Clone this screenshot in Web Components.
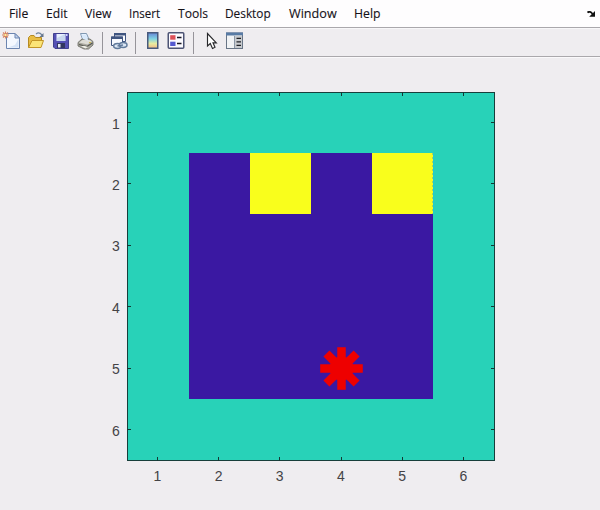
<!DOCTYPE html>
<html lang="en">
<head>
<meta charset="utf-8">
<title>Figure</title>
<style>
html,body{margin:0;width:600px;height:510px;overflow:hidden;background:#efedf0}
</style>
</head>
<body>
<figure-window></figure-window>
<script>
class MenuItem extends HTMLElement{
  connectedCallback(){
    const w=this.getAttribute('width'),t=this.getAttribute('label');
    this.attachShadow({mode:'open'}).innerHTML=`<style>:host{display:block;height:20px}svg{display:block;overflow:visible}
    text{font:12.4px "Open Sans","Noto Sans",sans-serif;fill:#151118;stroke:#151118;stroke-width:.12px}</style>
    <svg width="${w}" height="20"><text x="0" y="14" textLength="${w}" lengthAdjust="spacingAndGlyphs">${t}</text></svg>`;
  }
}
customElements.define('menu-item',MenuItem);

class MenuBar extends HTMLElement{
  connectedCallback(){
    this.attachShadow({mode:'open'}).innerHTML=`<style>:host{display:flex;box-sizing:border-box;height:27px;padding:4px 4px 0 8.6px;gap:17.7px;background:#fefdfe}
    .dock{margin:7px 0 0 auto}</style>
    <menu-item label="File" width="19.3"></menu-item><menu-item label="Edit" width="21.5"></menu-item>
    <menu-item label="View" width="26.5"></menu-item><menu-item label="Insert" width="31"></menu-item>
    <menu-item label="Tools" width="30"></menu-item><menu-item label="Desktop" width="45.7"></menu-item>
    <menu-item label="Window" width="47.7"></menu-item><menu-item label="Help" width="26.5"></menu-item>
    <svg class="dock" width="9" height="7" viewBox="0 0 9 7"><path d="M.5 1.5Q3-.5 5.6 3" fill="none" stroke="#111" stroke-width="1.7"/><path d="M8 0V5.8H2.2Z" fill="#111"/></svg>`;
  }
}
customElements.define('menu-bar',MenuBar);

const icons={
new:`<path d="M4.5 2.5H13L17.5 7V17.5H4.5Z" fill="#f4f8ff" stroke="#6c85b0"/><path d="M6 16.5H16.5V8L13 14Z" fill="#d5e3f7"/><path d="M13 2.5V7H17.5Z" fill="#c3d5ef" stroke="#6c85b0"/><path d="M3.5.5V7.5M0 4H7M1 1.5L6 6.5M6 1.5L1 6.5" stroke="#d78561" stroke-width="1.1"/><rect x="2.5" y="3" width="2" height="2" fill="#fff09a"/>`,
open:`<path d="M1.5 16.5V6.5L3.5 4.5H7L8.5 6.5H14.5V9" fill="#e9bd43" stroke="#b58a22"/><path d="M1.5 16.5L5 9.5H16.5L14 16.5Z" fill="#fbe477" stroke="#c29527"/><path d="M9 3Q12 .5 15 4" fill="none" stroke="#70849d" stroke-width="1.2"/><path d="M16.5 2V6H12.5Z" fill="#64758c"/>`,
save:`<path d="M1.5 1.5H16.5V16.5H3L1.5 15Z" fill="#5551b5" stroke="#41418e"/><rect x="4.5" y="2" width="9" height="7" fill="#e9f1ff"/><path d="M5 6L13 2V9H5Z" fill="#c8d8ef"/><rect x="5" y="11" width="8" height="5" fill="#333760"/><rect x="6" y="12" width="2.5" height="3.5" fill="#e5eaf5"/><rect x="14" y="2" width="1.5" height="2" fill="#cbd0ff"/>`,
print:`<path d="M3.5 1.5H9.5L12.5 8.5H6Z" fill="#e3f0ff" stroke="#8198b1"/><path d="M1 10.5L5 7H13L16 9.5V13L11.5 17H7L1 14Z" fill="#aaa99f" stroke="#65665e" stroke-width=".8"/><path d="M2 10.5L5.5 8H12.5L15 9.7L10.5 12.5Z" fill="#dddcd5"/><path d="M6 7L4.5 3H9L11.5 9Z" fill="#d9e9fa"/><path d="M2 12.5L10 14.5L15.5 11" fill="none" stroke="#55564f" stroke-width="1.1"/><path d="M4 14.3L7 13.8L11 15L8.5 16.6Z" fill="#eeeeE6"/><rect x="12" y="10" width="2" height="1" fill="#cbb84e"/>`,
link:`<path d="M4.5 1.5H15.5V9.5H4.5Z" fill="#f9fbff" stroke="#405580"/><path d="M4 1H16V3.5H4Z" fill="#405580"/><path d="M1.5 5H12.5V13.5H1.5Z" fill="#f8faff" stroke="#405580"/><path d="M1 4.5H13V7H1Z" fill="#405580"/><g fill="#dce7f5" stroke="#627b9c" stroke-width="1.5"><ellipse cx="7.5" cy="14" rx="3.8" ry="2.4"/><ellipse cx="13.2" cy="13" rx="3.8" ry="2.4"/></g><path d="M7.5 14L13 13" stroke="#627b9c" stroke-width="1.4"/>`,
bar:`<defs><linearGradient id="g" x2="0" y2="1"><stop stop-color="#6685d6"/><stop offset=".4" stop-color="#80d5e3"/><stop offset=".7" stop-color="#e9eca0"/><stop offset="1" stop-color="#f2b985"/></linearGradient></defs><rect x="3.75" y=".75" width="10" height="15.5" fill="url(#g)" stroke="#485a7c" stroke-width="1.5"/>`,
legend:`<rect x="1.25" y=".75" width="15.5" height="15.5" rx="1" fill="#fbfaff" stroke="#4d5474" stroke-width="1.5"/><rect x="3.2" y="3.2" width="5.3" height="4.5" fill="#dc5058"/><rect x="3.2" y="9.7" width="5.3" height="4.3" fill="#5459d0"/><path d="M10 5.5H14.5M10 11.5H14.5" stroke="#171722" stroke-width="1.3"/>`,
arrow:`<path d="M4.5 1.5V14L7.3 11.5L9.5 16.5L12 15.3L10 10.8H13.3Z" fill="#fff" stroke="#28282b" stroke-width="1.15"/>`,
panel:`<rect x=".5" y="1" width="16" height="15.5" fill="#f1f3f5" stroke="#687586"/><path d="M0 .5H17V3.5H0Z" fill="#587ba5"/><path d="M9 3.5H16V16H9Z" fill="#c7cace"/><path d="M8.5 4V16" stroke="#8c97a6"/><path d="M10.5 6.3H15M10.5 9.8H15M10.5 13.3H15" stroke="#202126" stroke-width="1.3"/>`
};
class ToolIcon extends HTMLElement{
  connectedCallback(){
    this.attachShadow({mode:'open'}).innerHTML=`<style>:host{display:block;width:18px;height:19px}svg{display:block;overflow:visible}</style><svg width="18" height="19" viewBox="0 0 18 19">${icons[this.getAttribute('name')]}</svg>`;
  }
}
customElements.define('tool-icon',ToolIcon);

class ToolBar extends HTMLElement{
  connectedCallback(){
    this.attachShadow({mode:'open'}).innerHTML=`<style>:host{display:flex;box-sizing:border-box;height:30px;padding:4px 0 0 2px;border-top:1px solid #aaa8ac;border-bottom:1px solid #aaa8ac;background:#efedf0;box-shadow:inset 0 1px #f8f7f9,0 1px #faf9fb}
    tool-icon{flex:none}tool-icon[name=new],tool-icon[name=open]{margin-top:-1px}hr{flex:none;width:1px;height:22px;border:0;margin:0;background:#96949a}</style>
    <tool-icon name="new"></tool-icon><tool-icon name="open" style="margin-left:7px"></tool-icon><tool-icon name="save" style="margin-left:7px"></tool-icon><tool-icon name="print" style="margin:0 7px"></tool-icon><hr>
    <tool-icon name="link" style="margin:0 7px"></tool-icon><hr>
    <tool-icon name="bar" style="margin:0 5px 0 8px"></tool-icon><tool-icon name="legend" style="margin-right:8px"></tool-icon><hr>
    <tool-icon name="arrow" style="margin:0 5px 0 9px"></tool-icon><tool-icon name="panel"></tool-icon>`;
  }
}
customElements.define('tool-bar',ToolBar);

class GridPlot extends HTMLElement{
  connectedCallback(){
    let ticks='';
    for(let i=0;i<6;i++){
      const x=30+Math.round(i*61.2)+.5,y=31+Math.round(i*61.4)-.5;
      ticks+=`M${x} 0V4M${x} 369V365M0 ${y}H4M368 ${y}H364`;
    }
    const arms=[0,45,90,135].map(a=>`<path d="M0-21.3V21.3" transform="rotate(${a})"/>`).join('');
    const nums=[1,2,3,4,5,6].map(n=>`<span>${n}</span>`).join('');
    this.attachShadow({mode:'open'}).innerHTML=`<style>:host{display:grid;grid-template:369px 32px/22px 368px;padding:34.6px 0 0 104.8px;font:14px "Liberation Sans",Arial,sans-serif;color:#444346}
    svg{display:block}.y,.x{display:flex}.y{flex-direction:column;padding:2px 7px 0 0;height:369px;text-align:right}
    .y span{height:61.4px;line-height:61.4px}.x{grid-column:2;height:32px;line-height:31px;text-align:center}.x span{width:61.2px}</style>
    <div class="y">${nums}</div>
    <svg width="368" height="369"><rect width="368" height="369" fill="#28d2b8"/>
    <path d="M62 61H306V307H62Z" fill="#3a18a2"/><path d="M123 61H184V122H123ZM245 61H306V122H245Z" fill="#f9fe1c"/>
    <path d="M306.5 61V122" stroke="#20cbd2"/><path d="M305.5 61V122" stroke="#a9d85a" stroke-dasharray="2 2"/>
    <rect x=".5" y=".5" width="367" height="368" fill="none" stroke="#173f3b"/><path d="${ticks}" stroke="#143833"/>
    <g transform="translate(214.5 276.5)" stroke="#ee0000" stroke-width="8.5">${arms}<circle r="12" fill="#ee0000" stroke="none"/></g></svg>
    <div class="x">${nums}</div>`;
  }
}
customElements.define('grid-plot',GridPlot);

class FigureWindow extends HTMLElement{
  connectedCallback(){
    this.attachShadow({mode:'open'}).innerHTML=`<style>:host{display:flex;flex-direction:column;width:600px;height:510px;background:#efedf0}</style><menu-bar></menu-bar><tool-bar></tool-bar><grid-plot></grid-plot>`;
  }
}
customElements.define('figure-window',FigureWindow);
</script>
</body>
</html>
